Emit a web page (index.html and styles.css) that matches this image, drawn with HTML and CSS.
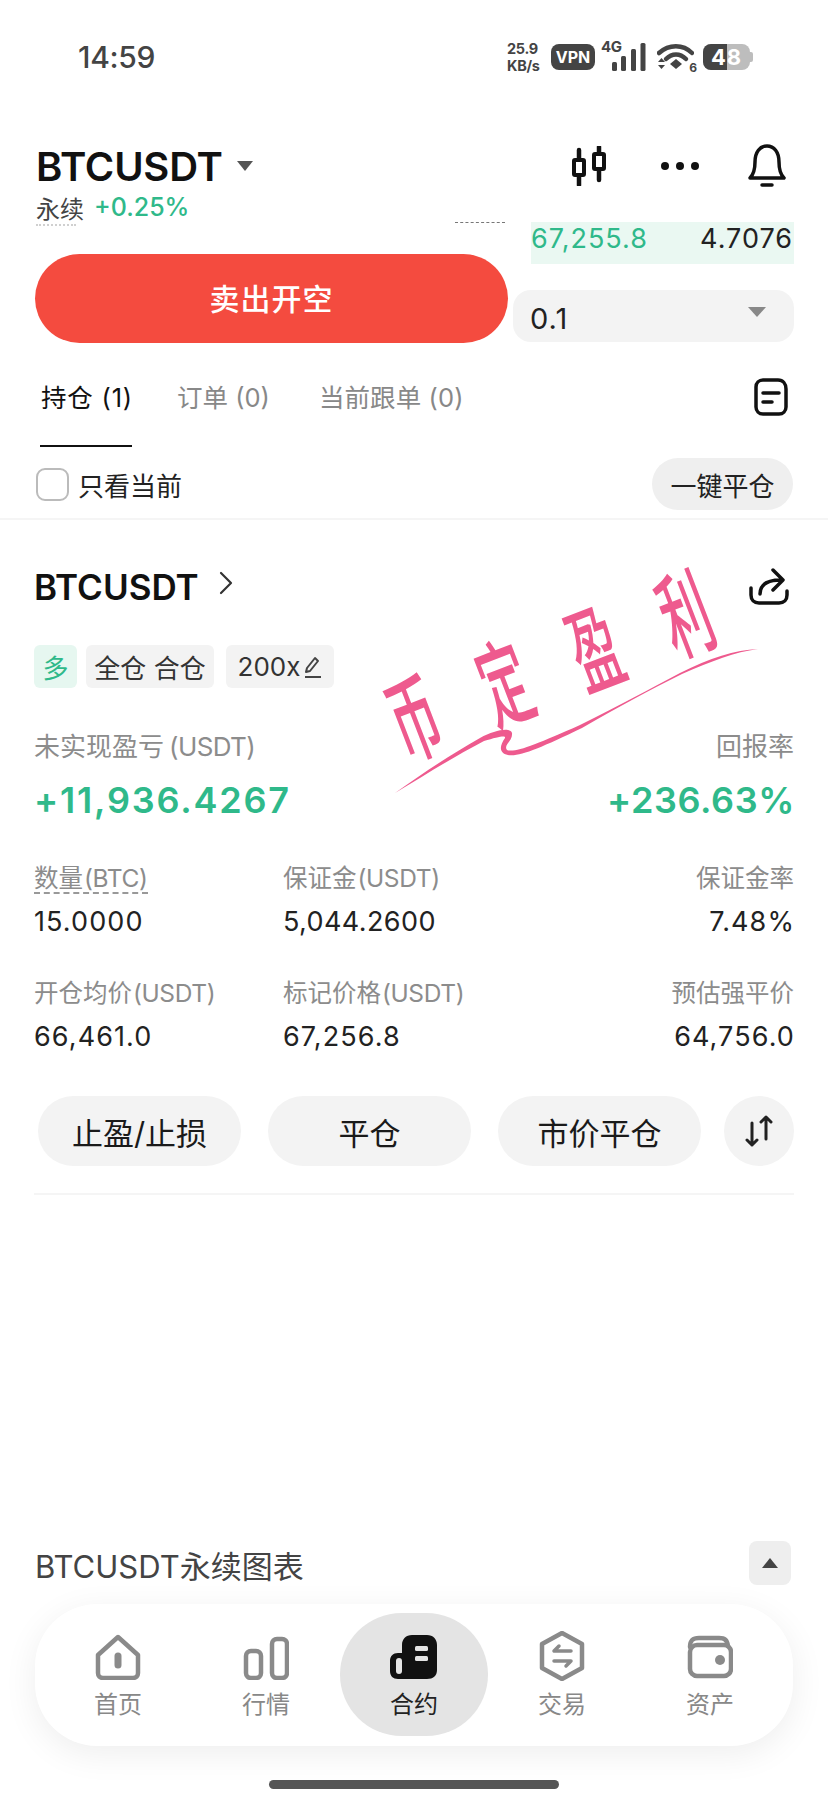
FILE: index.html
```html
<!DOCTYPE html>
<html lang="zh-CN">
<head>
<meta charset="utf-8">
<title>BTCUSDT</title>
<link rel="stylesheet" href="styles.css">
</head>
<body>
<div class="page">
  <div class="status">
    <span class="time">14:59</span>
    <div class="status-right">
      <div class="speed"><span>25.9</span><span>KB/s</span></div>
      <span class="vpn">VPN</span>
      <div class="signal">
        <span class="net">4G</span>
        <svg width="34" height="28" viewBox="0 0 34 28"><rect class="fill-status" x="0" y="19" width="5" height="9" rx="1.5"/><rect class="fill-status" x="9" y="13" width="5" height="15" rx="1.5"/><rect class="fill-status" x="19" y="6" width="5" height="22" rx="1.5"/><rect class="fill-status" x="28.500" y="0" width="5" height="28" rx="1.500"/></svg>
      </div>
      <div class="wifi">
        <svg width="37" height="27" viewBox="0 0 37 27"><path class="stroke-status" d="M2 9C12 0 26 0 35 9"/><path class="stroke-status" d="M9 15C15 9 23 9 29 15"/><path class="fill-status" d="M13 20L19 15L25 20L19 25Z"/><path class="fill-status" d="M1 18L4.500 14L8 18ZM1 21L8 21L4.500 25Z"/></svg>
        <span class="wifi-num">6</span>
      </div>
      <div class="battery"><div class="battery-cell"><span class="battery-level"></span><span class="battery-num">48</span></div><span class="battery-tip"></span></div>
    </div>
  </div>

  <header class="head">
    <div class="head-top">
      <div class="pair"><span class="pair-name">BTCUSDT</span><span class="caret"></span></div>
      <div class="head-icons">
        <svg width="36" height="40" viewBox="0 0 36 40"><path class="stroke-wick" d="M8 4V39M28 1V34"/><rect class="body-ink" x="3" y="14" width="10" height="15" rx="1"/><rect class="body-ink" x="23" y="8" width="10" height="15" rx="1"/></svg>
        <svg class="dots" width="40" height="10" viewBox="0 0 40 10"><circle class="fill-ink" cx="5" cy="5" r="4"/><circle class="fill-ink" cx="20" cy="5" r="4"/><circle class="fill-ink" cx="35" cy="5" r="4"/></svg>
        <svg width="40" height="44" viewBox="0 0 40 44"><path class="stroke-ink" d="M3 34C7 30 8 25 8 18C8 8 13 2 20 2C27 2 32 8 32 18C32 25 33 30 37 34Z"/><path class="stroke-ink" d="M15 41H25"/></svg>
      </div>
    </div>
    <div class="sub"><span class="sub-name">永续</span><span class="sub-pct">+0.25%</span></div>
  </header>

  <section class="strip">
    <button class="sell">卖出开空</button>
    <div class="book">
      <div class="book-row"><span class="book-price">67,255.8</span><span class="book-qty">4.7076</span></div>
      <div class="select"><span>0.1</span><span class="select-caret"></span></div>
    </div>
  </section>

  <nav class="tabs">
    <span class="tab tab-on">持仓 (1)</span>
    <span class="tab tab-2">订单 (0)</span>
    <span class="tab tab-3">当前跟单 (0)</span>
    <svg class="tab-doc" width="34" height="38" viewBox="0 0 34 38"><path class="stroke-ink" d="M9 2H24C29 2 32 6 32 11V29C32 33 29 36 25 36H9C5 36 2 33 2 29V9C2 5 5 2 9 2Z"/><path class="stroke-ink" d="M9 15H25M9 24H18"/></svg>
  </nav>

  <div class="filter">
    <label class="only"><span class="check"></span>只看当前</label>
    <button class="close-all">一键平仓</button>
  </div>

  <section class="card">
    <div class="card-head">
      <div class="card-title"><span>BTCUSDT</span>
        <svg width="14" height="24" viewBox="0 0 14 24"><path class="stroke-thin" d="M2 2L12 12L2 22"/></svg>
      </div>
      <svg width="40" height="38" viewBox="0 0 40 38"><path class="stroke-ink" d="M2 20V27C2 32 5 35 10 35H30C35 35 38 32 38 27V23"/><path class="stroke-ink" d="M11 26C11 17 17 12 32 12M24 2L34 12L24 22"/></svg>
    </div>
    <div class="tags">
      <span class="tag tag-long">多</span>
      <span class="tag tag-mode">全仓 合仓</span>
      <span class="tag tag-lev">200x<svg width="19" height="24" viewBox="0 0 19 24"><path class="stroke-tag" d="M4 13L12 3L15 6L7 16L3 17ZM2 22H18"/></svg></span>
    </div>
    <div class="pnl-labels"><span>未实现盈亏<span class="unit">(USDT)</span></span><span>回报率</span></div>
    <div class="pnl-values"><span class="pnl-amount">+11,936.4267</span><span class="pnl-rate">+236.63%</span></div>
    <div class="stats">
      <div class="stat"><span class="stat-label stat-dashed">数量<span class="unit">(BTC)</span></span><span class="stat-value">15.0000</span></div>
      <div class="stat"><span class="stat-label">保证金<span class="unit">(USDT)</span></span><span class="stat-value stat-long">5,044.2600</span></div>
      <div class="stat stat-end"><span class="stat-label">保证金率</span><span class="stat-value">7.48%</span></div>
      <div class="stat"><span class="stat-label">开仓均价<span class="unit">(USDT)</span></span><span class="stat-value">66,461.0</span></div>
      <div class="stat"><span class="stat-label">标记价格<span class="unit">(USDT)</span></span><span class="stat-value">67,256.8</span></div>
      <div class="stat stat-end"><span class="stat-label">预估强平价</span><span class="stat-value">64,756.0</span></div>
    </div>
    <div class="actions">
      <button class="action">止盈/止损</button>
      <button class="action">平仓</button>
      <button class="action">市价平仓</button>
      <button class="action-icon"><svg width="30" height="32" viewBox="0 0 30 32"><path class="stroke-ink-thin" d="M8 8V30M3 25L8 30L13 25M22 24V2M17 7L22 2L27 7"/></svg></button>
    </div>
  </section>

  <div class="grow"></div>

  <div class="chart-bar">
    <span class="chart-title">BTCUSDT永续图表</span>
    <span class="chart-toggle"><span class="toggle-caret"></span></span>
  </div>

  <nav class="dock">
    <div class="dock-item">
      <svg width="46" height="46" viewBox="0 0 46 46"><path class="stroke-nav" d="M23 3L43 21V39C43 42 41 44 38 44H8C5 44 3 42 3 39V21Z"/><path class="stroke-nav-heavy" d="M23 22V31"/></svg>
      <span>首页</span>
    </div>
    <div class="dock-item">
      <svg width="46" height="46" viewBox="0 0 46 46"><rect class="stroke-nav" x="3" y="17" width="15" height="27" rx="5"/><rect class="stroke-nav" x="29" y="5" width="15" height="39" rx="5"/></svg>
      <span>行情</span>
    </div>
    <div class="dock-item dock-on">
      <svg width="48" height="46" viewBox="0 0 48 46"><path class="fill-ink" d="M22 1H37C43 1 47 5 47 11V36C47 42 43 45 37 45H8C3 45 0 42 0 37V27C0 22 3 19 8 19H12V11C12 5 16 1 22 1Z"/><rect class="slot" x="6" y="24" width="6" height="16" rx="3"/><rect class="slot" x="25" y="12" width="13" height="5" rx="1.500"/><rect class="slot" x="25" y="22" width="13" height="5" rx="1.500"/></svg>
      <span>合约</span>
    </div>
    <div class="dock-item">
      <svg class="hex" width="46" height="50" viewBox="0 0 46 50"><path class="stroke-nav" d="M23 2L43 13V37L23 48L3 37V13Z"/><path class="stroke-nav-thin" d="M15 20L20 15M15 20H32M32 30H15M32 30L27 35"/></svg>
      <span>交易</span>
    </div>
    <div class="dock-item">
      <svg width="46" height="46" viewBox="0 0 46 46"><path class="stroke-nav" d="M3 13C3 6 6 4 12 4H32C38 4 40 6 41 12"/><rect class="stroke-nav" x="3" y="11" width="41" height="31" rx="7"/><circle class="fill-nav" cx="33" cy="26" r="5"/></svg>
      <span>资产</span>
    </div>
  </nav>

  <div class="home-bar"></div>

  <span class="clip-a"></span>
  <span class="clip-b"></span>
  <div class="scrawl">币定盈利</div>
  <svg class="swash" width="375" height="160" viewBox="390 640 375 160"><path class="swash-ink" d="M395 793C420 775 450 755 480 738C495 730 510 727 512 733C513 741 503 745 507 750C515 753 535 745 580 725C620 705 650 689 680 673C710 658 735 650 758 649C735 652 712 661 682 674C650 690 620 706 582 728C540 748 520 757 508 755C498 753 500 745 505 738C506 735 498 737 484 741C455 756 425 775 395 793Z"/></svg>
</div>
</body>
</html>
```

FILE: styles.css
```css
* { box-sizing: border-box; }
html, body { margin: 0; padding: 0; background: #fff; }
body { font-family: Inter, "Noto Sans CJK SC", sans-serif; color: #111; }
button { font: inherit; border: 0; padding: 0; color: inherit; }
svg { display: block; flex: none; }

.page { position: relative; width: 828px; height: 1803px; overflow: hidden; display: flex; flex-direction: column; background: #fff; }

.fill-status { fill: #444; }
.stroke-status { fill: none; stroke: #444; stroke-width: 4.500; stroke-linecap: round; }
.fill-ink { fill: #111; }
.stroke-ink { fill: none; stroke: #111; stroke-width: 3.500; stroke-linecap: round; stroke-linejoin: round; }
.stroke-wick { fill: none; stroke: #111; stroke-width: 4.500; stroke-linecap: round; }
.stroke-ink-thin { fill: none; stroke: #222; stroke-width: 3; stroke-linecap: round; stroke-linejoin: round; }
.stroke-thin { fill: none; stroke: #333; stroke-width: 2.200; stroke-linecap: round; stroke-linejoin: round; }
.body-ink { fill: #fff; stroke: #111; stroke-width: 4; }
.stroke-tag { fill: none; stroke: #444; stroke-width: 2; stroke-linejoin: round; }
.stroke-nav { fill: none; stroke: #8a8a8a; stroke-width: 4.500; stroke-linecap: round; stroke-linejoin: round; }
.stroke-nav-thin { fill: none; stroke: #8a8a8a; stroke-width: 3.500; stroke-linecap: round; stroke-linejoin: round; }
.stroke-nav-heavy { fill: none; stroke: #8a8a8a; stroke-width: 7; stroke-linecap: round; }
.fill-nav { fill: #8a8a8a; }
.slot { fill: #e4e4e4; }

.status { height: 114px; display: flex; align-items: center; padding: 0 75px 0 78px; color: #444; }
.time { font-size: 30px; font-weight: 500; letter-spacing: -.3px; }
.status-right { margin-left: auto; display: flex; align-items: center; }
.speed { display: flex; flex-direction: column; font-size: 14.500px; line-height: 17px; font-weight: 700; width: 44px; letter-spacing: -.3px; }
.vpn { width: 44px; height: 26px; border-radius: 8px; background: #444; color: #fff; font-size: 16px; font-weight: 700; display: flex; align-items: center; justify-content: center; }
.signal { position: relative; width: 45px; height: 28px; margin: 0 11px 0 6px; display: flex; justify-content: flex-end; }
.net { position: absolute; left: 0; top: -3px; font-size: 15px; font-weight: 700; line-height: 14px; letter-spacing: -.4px; }
.wifi { position: relative; margin-right: 9px; }
.wifi-num { position: absolute; right: -3px; bottom: -3px; font-size: 12px; line-height: 12px; font-weight: 700; }
.battery { display: flex; align-items: center; }
.battery-cell { position: relative; width: 47px; height: 26px; border-radius: 8px; background: #bdbdbd; overflow: hidden; display: flex; align-items: center; justify-content: center; }
.battery-tip { width: 3px; height: 10px; border-radius: 0 2px 2px 0; background: #bdbdbd; }
.battery-level { position: absolute; left: 0; top: 0; bottom: 0; width: 24px; background: #444; }
.battery-num { position: relative; color: #fff; font-size: 22px; font-weight: 700; letter-spacing: 1px; }

.head { height: 108px; padding: 26px 34px 0 36px; }
.head-top { height: 52px; display: flex; align-items: center; justify-content: space-between; }
.pair { display: flex; align-items: center; }
.pair-name { font-size: 40px; font-weight: 600; letter-spacing: -.2px; }
.caret { width: 0; height: 0; margin: 0 0 0 14px; border-style: solid; border-width: 10px 8px 0; border-color: #555 transparent transparent; }
.head-icons { display: flex; align-items: center; margin-right: 7px; }
.dots { margin: 0 47px 0 53px; }
.sub { height: 30px; display: flex; align-items: center; }
.sub-name { font-size: 24px; color: #444; }
.sub-pct { margin-left: 10px; font-size: 25px; font-weight: 500; color: #2fb98a; }

.strip { height: 121px; display: flex; padding: 0 34px 0 35px; gap: 5px; align-items: flex-start; }
.sell { width: 473px; height: 89px; margin-top: 32px; border-radius: 45px; background: #f44b3f; color: #fff; font-size: 30px; font-weight: 500; letter-spacing: 1px; padding-bottom: 4px; }
.book { flex: 1; display: flex; flex-direction: column; align-items: flex-end; }
.book-row { width: 263px; height: 42px; background: #eaf8f2; display: flex; justify-content: space-between; font-size: 27px; line-height: 34px; padding-right: 1px; letter-spacing: 1px; }
.book-price { color: #2fb98a; font-weight: 400; }
.book-qty { color: #222; }
.select { width: 100%; height: 52px; margin-top: 26px; border-radius: 18px; background: #f3f3f3; display: flex; align-items: center; justify-content: space-between; padding: 0 28px 0 17px; font-size: 29px; letter-spacing: 1px; color: #222; }
.select span:first-child { padding-top: 4px; }
.select-caret { width: 0; height: 0; margin-bottom: 8px; border-style: solid; border-width: 10px 9px 0; border-color: #888 transparent transparent; }

.tabs { height: 104px; padding: 37px 0 0 41px; position: relative; display: flex; align-items: flex-start; }
.tab { font-size: 25.500px; line-height: 36px; color: #888; white-space: nowrap; }
.tab-on { color: #111; width: 92px; height: 67px; border-bottom: 2px solid #111; margin-left: -1px; padding-left: 1px; letter-spacing: .8px; }
.tab-2 { margin-left: 45px; }
.tab-3 { margin-left: 49px; letter-spacing: .1px; }
.tab-doc { position: absolute; right: 40px; top: 35px; }

.filter { padding: 11px 35px 8px 36px; border-bottom: 2px solid #f5f5f5; display: flex; align-items: center; justify-content: space-between; }
.only { display: flex; align-items: center; font-size: 26px; color: #222; }
.check { width: 33px; height: 33px; margin-right: 9px; border: 2.500px solid #bbb; border-radius: 9px; }
.close-all { width: 141px; height: 52px; border-radius: 26px; background: #efefef; font-size: 26px; color: #222; }

.card { padding: 43px 34px 0; }
.card-head { height: 48px; display: flex; align-items: center; justify-content: space-between; padding-right: 5px; }
.card-title { display: flex; align-items: center; gap: 20px; font-size: 35px; font-weight: 600; letter-spacing: 0; }
.card-title svg { margin-top: -8px; }
.tags { display: flex; margin-top: 34px; height: 43px; }
.tag { height: 43px; border-radius: 6px; background: #f3f3f3; font-size: 26px; color: #333; display: flex; align-items: center; justify-content: center; }
.tag-long { width: 43px; background: #e6f7f0; color: #2fb98a; }
.tag-mode { width: 128px; margin-left: 9px; }
.tag-lev { width: 108px; margin-left: 12px; gap: 3px; }
.unit { margin-left: 1px; letter-spacing: -.4px; }
.pnl-labels, .pnl-values { display: flex; justify-content: space-between; }
.pnl-labels { margin-top: 42px; height: 34px; line-height: 34px; font-size: 26px; color: #8c8c8c; }
.pnl-labels .unit { margin-left: 5px; letter-spacing: -.6px; }
.pnl-values { margin-top: 14px; height: 44px; line-height: 44px; font-size: 36px; font-weight: 600; color: #2fb98a; }
.pnl-amount { letter-spacing: 1.8px; }
.pnl-rate { letter-spacing: .6px; margin-right: -1px; }
.stats { display: grid; grid-template-columns: 249px 1fr auto; row-gap: 36px; margin-top: 39px; }
.stat { display: flex; flex-direction: column; align-items: flex-start; }
.stat-end { align-items: flex-end; }
.stat-label { height: 34px; line-height: 34px; font-size: 24.500px; color: #8c8c8c; white-space: nowrap; }
.stat-dashed { border-bottom: 2px dashed #999; height: 32px; line-height: 32px; margin-top: 1px; margin-bottom: 1px; }
.stat-value { margin-top: 9px; height: 36px; line-height: 36px; font-size: 27px; letter-spacing: 1.1px; color: #222; }
.stat-long { letter-spacing: .4px; }
.stat-end .stat-value { margin-right: -1px; }
.actions { display: flex; gap: 27px; margin-top: 41px; padding: 0 0 27px 4px; border-bottom: 2px solid #f5f5f5; }
.action { flex: 1; height: 70px; border-radius: 35px; background: #f3f3f3; font-size: 31px; color: #1a1a1a; }
.action-icon { width: 70px; height: 70px; margin-left: -4px; border-radius: 35px; background: #f3f3f3; display: flex; align-items: center; justify-content: center; }

.grow { flex: 1; }

.chart-bar { display: flex; align-items: center; justify-content: space-between; padding: 0 37px 0 36px; height: 44px; }
.chart-title { font-size: 31px; color: #444; padding-top: 2px; margin-left: -1px; }
.chart-toggle { width: 42px; height: 44px; border-radius: 8px; background: #eee; display: flex; align-items: center; justify-content: center; }
.toggle-caret { width: 0; height: 0; border-style: solid; border-width: 0 8px 10px; border-color: transparent transparent #444; }

.dock { margin: 19px 35px 0; height: 142px; border-radius: 62px; background: #fff; box-shadow: 0 8px 34px rgba(0,0,0,.07); display: flex; padding: 0 9px; }
.dock-item { position: relative; flex: 1; display: flex; flex-direction: column; align-items: center; padding-top: 30px; font-size: 24px; line-height: 32px; color: #888; gap: 9px; }
.dock-on { color: #222; }
.dock-on::before { content: ""; position: absolute; left: 0; right: 0; top: 9px; bottom: 10px; background: #e4e4e4; border-radius: 62px; }
.dock-on svg, .dock-on span { position: relative; }
.hex { margin: -3px 0 -1px; }

.home-bar { width: 290px; height: 9px; margin: 34px auto 14px; border-radius: 5px; background: #555; }

.clip-a { position: absolute; left: 36px; top: 224px; width: 40px; border-top: 2px dotted #d0d0d0; }
.clip-b { position: absolute; left: 455px; top: 222px; width: 50px; border-top: 1px dashed #777; }

.scrawl { position: absolute; left: 297px; top: 615px; font-size: 68px; line-height: 86px; font-weight: 500; letter-spacing: 70px; color: #ee5a8e; white-space: nowrap; transform: rotate(-21deg) scale(.7, 1.4); }
.swash { position: absolute; left: 390px; top: 640px; }
.swash-ink { fill: #ee5a8e; }
```
